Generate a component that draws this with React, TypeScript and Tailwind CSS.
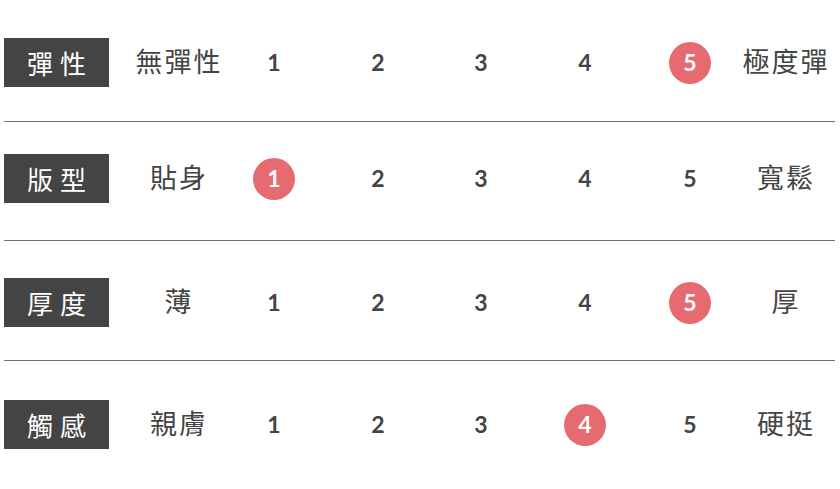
const ROWS = [
  { label: '彈性', low: '無彈性', high: '極度彈', pick: 5, pad: 'pt-[38px] pb-[34px]' },
  { label: '版型', low: '貼身', high: '寬鬆', pick: 1, pad: 'pt-[32px] pb-[37px]' },
  { label: '厚度', low: '薄', high: '厚', pick: 5, pad: 'pt-[37px] pb-[33px]' },
  { label: '觸感', low: '親膚', high: '硬挺', pick: 4, pad: 'pt-[39px] pb-[40px]' },
]

// left margins so each 80px cell lands on the column centres of the reference
const NUM_MARGINS = ['ml-[16px]', 'ml-[24px]', 'ml-[23px]', 'ml-[24px]', 'ml-[25px]']

const cjk = "font-['Noto_Sans_CJK_TC','Noto_Sans',sans-serif]"

function ScaleRow({ row, last }: { row: (typeof ROWS)[number]; last: boolean }) {
  return (
    <div className={`${row.pad} ${last ? '' : 'border-b border-[#707070]'}`}>
      <div className="flex items-center h-[49px]">
        <div
          className={`w-[105px] h-[49px] shrink-0 bg-[#444444] text-white text-[26px] tracking-[7px] pl-[7px] flex items-center justify-center whitespace-nowrap ${cjk}`}
        >
          {row.label}
        </div>
        <div className={`ml-[29px] w-20 shrink-0 flex justify-center whitespace-nowrap text-[27px] tracking-[2px] text-[#444444] ${cjk}`}>
          <span className="pl-[2px] -mt-[2px]">{row.low}</span>
        </div>
        {[1, 2, 3, 4, 5].map((n, i) => (
          <div key={n} className={`${NUM_MARGINS[i]} w-20 shrink-0 flex justify-center`}>
            {n === row.pick ? (
              <span className="w-[42px] h-[42px] rounded-full bg-[#e56b71] text-white flex items-center justify-center text-[23px] font-bold font-['Lato',sans-serif]">
                {n}
              </span>
            ) : (
              <span className="text-[23px] font-bold text-[#444444] font-['Lato',sans-serif]">{n}</span>
            )}
          </div>
        ))}
        <div className={`ml-[15px] w-20 shrink-0 flex justify-center whitespace-nowrap text-[27px] tracking-[2px] text-[#444444] ${cjk}`}>
          <span className="pl-[2px] -mt-[2px]">{row.high}</span>
        </div>
      </div>
    </div>
  )
}

export default function App() {
  return (
    <div className="w-[840px] h-[489px] bg-white overflow-hidden">
      <div className="ml-[4px] w-[831px]">
        {ROWS.map((row, i) => (
          <ScaleRow key={row.label} row={row} last={i === ROWS.length - 1} />
        ))}
      </div>
    </div>
  )
}
